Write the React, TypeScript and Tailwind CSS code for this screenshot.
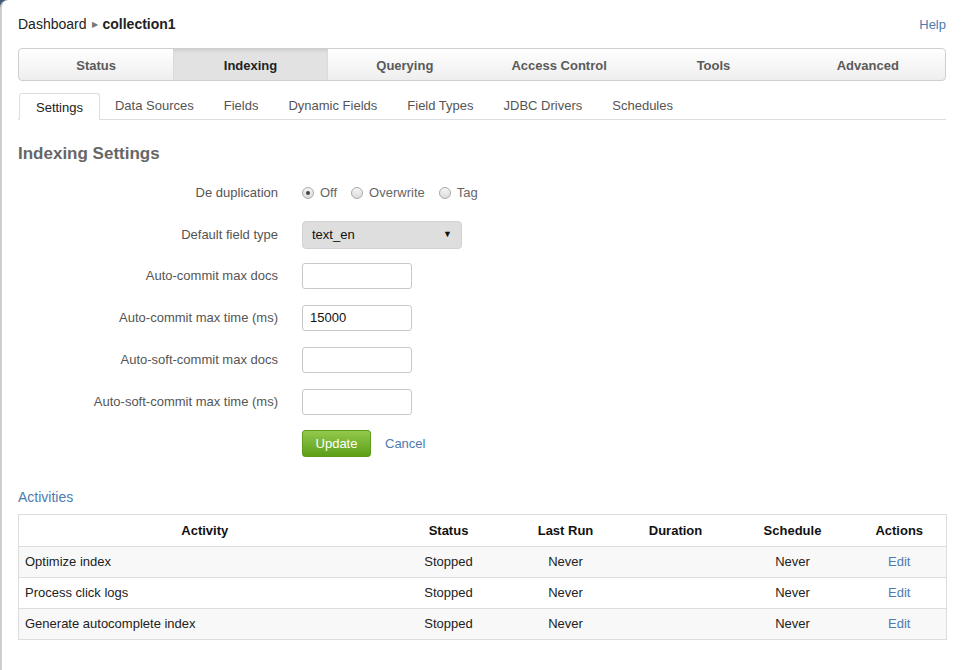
import React from "react";

const mainTabs = ["Status", "Indexing", "Querying", "Access Control", "Tools", "Advanced"];
const subTabs = ["Settings", "Data Sources", "Fields", "Dynamic Fields", "Field Types", "JDBC Drivers", "Schedules"];

function Radio({ checked, label }: { checked?: boolean; label: string }) {
  return (
    <span className="flex items-center mr-[14px]">
      <span className="w-[12px] h-[12px] rounded-full border border-[#a9a9a9] bg-gradient-to-b from-[#f4f4f4] to-[#dcdcdc] flex items-center justify-center">
        {checked && <span className="w-[4px] h-[4px] rounded-full bg-[#444]" />}
      </span>
      <span className="ml-[6px] text-[13px] text-[#666]">{label}</span>
    </span>
  );
}

function Row({ label, children, h }: { label: string; children: React.ReactNode; h: string }) {
  return (
    <div className={`flex items-center ${h}`}>
      <div className="w-[260px] text-right text-[13px] text-[#555] pr-0">{label}</div>
      <div className="ml-[24px] flex items-center">{children}</div>
    </div>
  );
}

function Input({ value }: { value?: string }) {
  return (
    <div className="w-[110px] h-[26px] border border-[#c8c8c8] rounded-[3px] bg-white flex items-center px-[7px] text-[13px] text-[#111]">
      {value}
    </div>
  );
}

const rows = [
  ["Optimize index", "Stopped", "Never", "", "Never"],
  ["Process click logs", "Stopped", "Never", "", "Never"],
  ["Generate autocomplete index", "Stopped", "Never", "", "Never"],
];

export default function App() {
  return (
    <div className="w-[962px] h-[670px] bg-[#3f5a76] overflow-hidden" style={{ fontFamily: '"Liberation Sans", Arial, sans-serif' }}>
      <div className="w-full h-full bg-white rounded-tl-[8px] border-l-2 border-[#cdcdcd] pl-[16px] pr-[16px]">
        {/* breadcrumb */}
        <div className="flex items-center justify-between h-[48px] pt-[1px]">
          <div className="flex items-center text-[14px] text-[#222]">
            <span>Dashboard</span>
            <span className="mx-[5px] text-[8px] text-[#777]">&#9654;</span>
            <span className="font-bold">collection1</span>
          </div>
          <span className="text-[13px] text-[#4d7bb0]">Help</span>
        </div>

        {/* main tabs */}
        <div className="flex h-[33px] border border-[#cfcfcf] rounded-[4px] bg-gradient-to-b from-white to-[#eeeeee] overflow-hidden">
          {mainTabs.map((t, i) => (
            <div
              key={t}
              className={
                i === 1
                  ? "flex-1 flex items-center justify-center pt-[2px] text-[13px] font-bold text-[#222] bg-[#e2e2e2] shadow-[inset_0_2px_3px_rgba(0,0,0,0.08)]"
                  : "flex-1 flex items-center justify-center pt-[2px] text-[13px] font-bold text-[#5a5a5a]"
              }
            >
              {t}
            </div>
          ))}
        </div>

        {/* sub tabs */}
        <div className="flex items-end mt-[13px] h-[26px] border-b border-[#dddddd]">
          {subTabs.map((t, i) => (
            <div
              key={t}
              className={
                i === 0
                  ? "h-[27px] -mb-px ml-[1px] px-[16px] flex items-center text-[13px] text-[#222] bg-white border border-[#dddddd] border-b-white rounded-t-[3px]"
                  : "h-[26px] px-[15px] flex items-center text-[13px] text-[#555]"
              }
            >
              <span className={i === 0 ? "pt-[2px]" : ""}>{t}</span>
            </div>
          ))}
        </div>

        {/* heading */}
        <div className="mt-[24px] text-[17px] font-bold text-[#666] leading-[20px]">Indexing Settings</div>

        {/* form */}
        <div className="mt-[19px]">
          <Row label="De duplication" h="h-[20px]">
            <Radio checked label="Off" />
            <Radio label="Overwrite" />
            <Radio label="Tag" />
          </Row>
          <div className="h-[18px]" />
          <Row label="Default field type" h="h-[28px]">
            <div className="w-[160px] h-[28px] rounded-[4px] bg-[#dedede] border border-[#d2d2d2] flex items-center justify-between px-[9px] text-[13px] text-[#111]">
              <span>text_en</span>
              <span className="text-[9px] text-[#111]">&#9660;</span>
            </div>
          </Row>
          <div className="h-[14px]" />
          <Row label="Auto-commit max docs" h="h-[26px]">
            <Input />
          </Row>
          <div className="h-[16px]" />
          <Row label="Auto-commit max time (ms)" h="h-[26px]">
            <Input value="15000" />
          </Row>
          <div className="h-[16px]" />
          <Row label="Auto-soft-commit max docs" h="h-[26px]">
            <Input />
          </Row>
          <div className="h-[16px]" />
          <Row label="Auto-soft-commit max time (ms)" h="h-[26px]">
            <Input />
          </Row>
          <div className="h-[15px]" />
          <div className="flex items-center h-[27px]">
            <div className="w-[260px]" />
            <div className="ml-[24px] flex items-center">
              <div className="w-[69px] h-[27px] rounded-[3px] border border-[#5c9c1c] bg-gradient-to-b from-[#93c94a] to-[#5c9f16] text-white text-[13px] flex items-center justify-center">
                Update
              </div>
              <span className="ml-[14px] text-[13px] text-[#4d7bb0]">Cancel</span>
            </div>
          </div>
        </div>

        {/* activities */}
        <div className="mt-[32px] text-[14px] text-[#4d7bb0] leading-[16px]">Activities</div>
        <table className="mt-[9px] w-[928px] border-collapse text-[13px] text-[#222]" style={{ tableLayout: "fixed" }}>
          <colgroup>
            <col className="w-[372px]" />
            <col className="w-[116px]" />
            <col className="w-[118px]" />
            <col className="w-[102px]" />
            <col className="w-[132px]" />
            <col className="w-[88px]" />
          </colgroup>
          <thead>
            <tr className="h-[32px]">
              {["Activity", "Status", "Last Run", "Duration", "Schedule", "Actions"].map((h, i) => (
                <th key={h} className={`border-t border-b border-[#dddddd] first:border-l last:border-r font-bold text-center text-[13px] text-[#111] ${i === 5 ? "pr-[6px]" : ""}`}>
                  {h}
                </th>
              ))}
            </tr>
          </thead>
          <tbody>
            {rows.map((r, i) => (
              <tr key={i} className={i % 2 === 0 ? "h-[31px] bg-[#f8f8f8]" : "h-[31px] bg-white"}>
                <td className="border-l border-b border-[#dddddd] pl-[6px] text-left">{r[0]}</td>
                <td className="border-b border-[#dddddd] text-center">{r[1]}</td>
                <td className="border-b border-[#dddddd] text-center">{r[2]}</td>
                <td className="border-b border-[#dddddd] text-center">{r[3]}</td>
                <td className="border-b border-[#dddddd] text-center">{r[4]}</td>
                <td className="border-r border-b border-[#dddddd] text-center pr-[6px] text-[#4d7bb0]">Edit</td>
              </tr>
            ))}
          </tbody>
        </table>
      </div>
    </div>
  );
}
